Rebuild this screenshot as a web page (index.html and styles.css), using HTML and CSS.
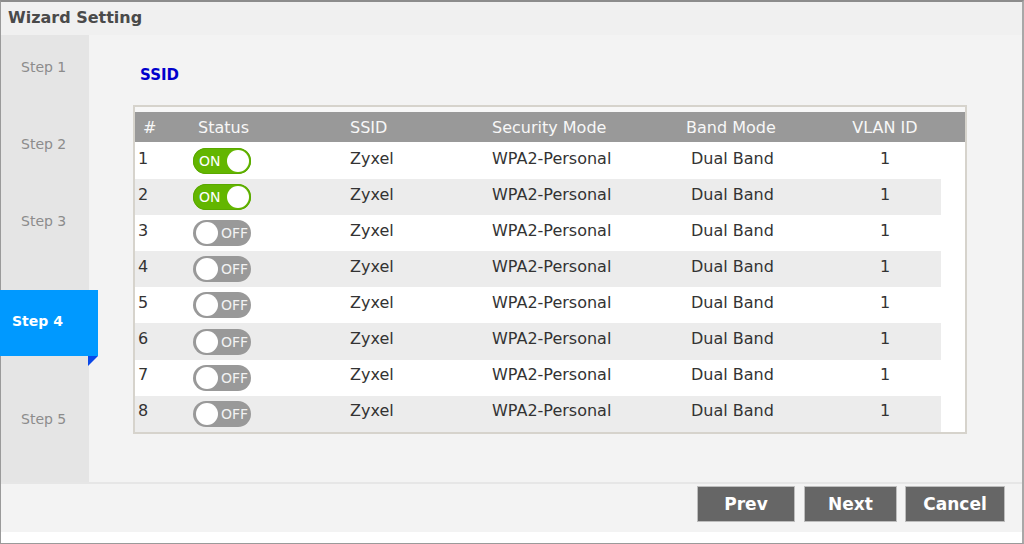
FILE: index.html
```html
<!DOCTYPE html>
<html>
<head>
<meta charset="utf-8">
<link rel="stylesheet" href="styles.css">
</head>
<body>
<div class="frame">
  <div class="title">Wizard Setting</div>
  <div class="body">
    <div class="sidebar">
      <div class="step s1">Step 1</div>
      <div class="step">Step 2</div>
      <div class="step s3">Step 3</div>
      <div class="tab">Step 4</div>
      <div class="step s5">Step 5</div>
    </div>
    <div class="main">
      <div class="heading">SSID</div>
      <div class="box">
        <div class="grid head">
          <div class="c-num">#</div>
          <div class="c-status">Status</div>
          <div>SSID</div>
          <div>Security Mode</div>
          <div>Band Mode</div>
          <div class="c-vlan">VLAN ID</div>
        </div>
        <div class="grid row"><div class="c-num t">1</div><div class="c-status"><span class="tog on"><span class="lbl">ON</span><span class="knob"></span></span></div><div class="t">Zyxel</div><div class="t">WPA2-Personal</div><div class="t band">Dual Band</div><div class="t c-vlan">1</div></div>
        <div class="grid row"><div class="c-num t">2</div><div class="c-status"><span class="tog on"><span class="lbl">ON</span><span class="knob"></span></span></div><div class="t">Zyxel</div><div class="t">WPA2-Personal</div><div class="t band">Dual Band</div><div class="t c-vlan">1</div></div>
        <div class="grid row"><div class="c-num t">3</div><div class="c-status"><span class="tog off"><span class="knob"></span><span class="lbl">OFF</span></span></div><div class="t">Zyxel</div><div class="t">WPA2-Personal</div><div class="t band">Dual Band</div><div class="t c-vlan">1</div></div>
        <div class="grid row"><div class="c-num t">4</div><div class="c-status"><span class="tog off"><span class="knob"></span><span class="lbl">OFF</span></span></div><div class="t">Zyxel</div><div class="t">WPA2-Personal</div><div class="t band">Dual Band</div><div class="t c-vlan">1</div></div>
        <div class="grid row"><div class="c-num t">5</div><div class="c-status"><span class="tog off"><span class="knob"></span><span class="lbl">OFF</span></span></div><div class="t">Zyxel</div><div class="t">WPA2-Personal</div><div class="t band">Dual Band</div><div class="t c-vlan">1</div></div>
        <div class="grid row"><div class="c-num t">6</div><div class="c-status"><span class="tog off"><span class="knob"></span><span class="lbl">OFF</span></span></div><div class="t">Zyxel</div><div class="t">WPA2-Personal</div><div class="t band">Dual Band</div><div class="t c-vlan">1</div></div>
        <div class="grid row"><div class="c-num t">7</div><div class="c-status"><span class="tog off"><span class="knob"></span><span class="lbl">OFF</span></span></div><div class="t">Zyxel</div><div class="t">WPA2-Personal</div><div class="t band">Dual Band</div><div class="t c-vlan">1</div></div>
        <div class="grid row"><div class="c-num t">8</div><div class="c-status"><span class="tog off"><span class="knob"></span><span class="lbl">OFF</span></span></div><div class="t">Zyxel</div><div class="t">WPA2-Personal</div><div class="t band">Dual Band</div><div class="t c-vlan">1</div></div>
      </div>
    </div>
  </div>
  <div class="footer">
    <button class="btn prev">Prev</button>
    <button class="btn next">Next</button>
    <button class="btn cancel">Cancel</button>
  </div>
  <div class="strip"></div>
</div>
</body>
</html>
```
FILE: styles.css
```css
* { box-sizing: border-box; }
html, body { margin: 0; padding: 0; }
body {
  width: 1024px;
  height: 544px;
  font-family: "DejaVu Sans", sans-serif;
  background: #fff;
  overflow: hidden;
}
.frame {
  width: 1024px;
  height: 544px;
  border: 1px solid #9a9a9a;
  border-top: 2px solid #8c8c8c;
  border-right: 2px solid #a8a8a8;
  display: flex;
  flex-direction: column;
  background: #fff;
}
.title {
  height: 33px;
  background: #f0f0f0;
  color: #4a4a4a;
  font-weight: bold;
  font-size: 16px;
  line-height: 32px;
  padding-left: 7px;
}
.body {
  height: 447px;
  display: flex;
}
.sidebar {
  width: 88px;
  background: #e5e5e5;
  display: flex;
  flex-direction: column;
  padding-top: 22px;
}
.step {
  height: 20px;
  line-height: 20px;
  font-size: 14px;
  color: #8c8c8c;
  padding-left: 20px;
  margin-bottom: 57px;
}
.step.s3 { margin-bottom: 59px; }
.tab {
  position: relative;
  width: 98px;
  height: 66px;
  margin-left: -1px;
  background: #0099ff;
  color: #fff;
  font-weight: bold;
  font-size: 14px;
  line-height: 62px;
  padding-left: 12px;
  flex-shrink: 0;
  z-index: 1;
}
.tab::after {
  content: "";
  position: absolute;
  right: 0;
  bottom: -10px;
  width: 0;
  height: 0;
  border-top: 10px solid #0a48e8;
  border-right: 10px solid transparent;
}
.step.s5 { margin-top: 53px; }
.main {
  flex: 1;
  background: #f3f3f3;
  padding-top: 30px;
}
.heading {
  height: 20px;
  line-height: 20px;
  color: #0000cc;
  font-weight: bold;
  font-size: 15px;
  padding-left: 51px;
  margin-bottom: 20px;
}
.box {
  margin-left: 44px;
  width: 834px;
  height: 329px;
  border: 2px solid #d6d3cc;
  padding-top: 5px;
  background: linear-gradient(#f7f7f7 0 5px, #fff 5px);
}
.grid {
  display: grid;
  grid-template-columns: 58px 157px 142px 194px 149px 100px;
  align-items: center;
}
.head {
  height: 30px;
  background: #999;
  color: #f7f7f7;
  font-size: 16px;
  margin-bottom: 1px;
}
.head .c-num { padding-left: 8px; }
.head .c-status { padding-left: 5px; }
.c-vlan { text-align: center; }
.row {
  width: 806px;
  height: 36.1px;
  font-size: 16px;
  color: #333;
}
.row:nth-child(odd) { background: #ececec; }
.row:nth-child(even) { background: #fff; }
.t { padding-bottom: 6px; }
.row .c-num { padding-left: 3px; }
.band { padding-left: 5px; }
.c-status { display: flex; align-items: center; }
.tog {
  width: 58px;
  height: 26px;
  border-radius: 13px;
  display: flex;
  align-items: center;
  font-size: 14px;
  color: #fff;
}
.tog.on {
  background: #63b600;
  box-shadow: inset 0 0 0 1px #5aa800;
  padding: 0 2px 0 6px;
  justify-content: space-between;
}
.tog.off {
  background: #999;
  padding: 0 3px 0 3px;
  justify-content: space-between;
  color: #f2f2f2;
}
.knob {
  width: 22px;
  height: 22px;
  border-radius: 50%;
  background: #fff;
}
.footer {
  height: 50px;
  border-top: 2px solid #e6e6e6;
  background: #f3f3f3;
  display: flex;
  justify-content: flex-end;
  align-items: flex-start;
  padding-top: 2px;
  padding-right: 17px;
  gap: 8px;
}
.btn {
  height: 36px;
  background: #666;
  border: 1px solid #bdbdbd;
  color: #fff;
  font-family: "DejaVu Sans", sans-serif;
  font-weight: bold;
  font-size: 17px;
  padding: 0;
}
.prev { width: 98px; margin-right: 1px; }
.next { width: 93px; }
.cancel { width: 100px; }
.strip {
  flex: 1;
  background: #fff;
}
```
